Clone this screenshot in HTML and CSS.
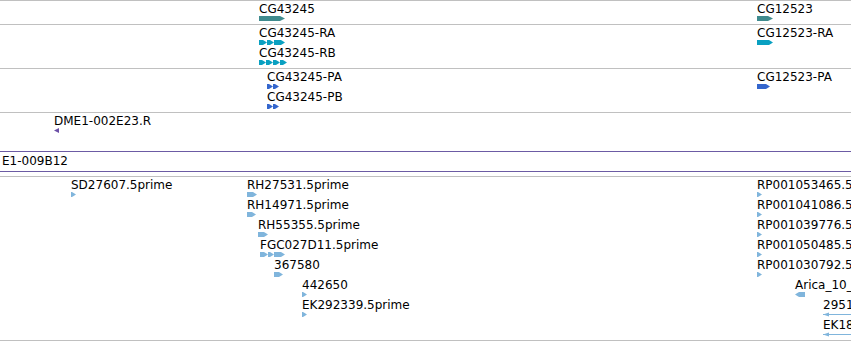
FILE: index.html
```html
<!DOCTYPE html>
<html lang="en">
<head>
    <meta charset="UTF-8">
    <title>Tracks</title>
    <link rel="stylesheet" href="styles.css">
</head>
<body>
<div class="view">

    <!-- genes -->
    <div class="track track-short">
        <div class="row">
            <div class="feature" style="left:259px">
                <div class="label">CG43245</div>
                <svg class="glyph gene" width="26" height="5"><polygon points="0,0 21,0 26,2.5 21,5 0,5"/></svg>
            </div>
            <div class="feature" style="left:757px">
                <div class="label">CG12523</div>
                <svg class="glyph gene" width="16" height="5"><polygon points="0,0 11,0 16,2.5 11,5 0,5"/></svg>
            </div>
        </div>
    </div>

    <!-- transcripts -->
    <div class="track track-two">
        <div class="row">
            <div class="feature" style="left:259px">
                <div class="label">CG43245-RA</div>
                <svg class="glyph mrna" width="26" height="5">
                    <polygon points="0,0 4,0 8,2.5 4,5 0,5"/>
                    <polygon points="8,0 11,0 15,2.5 11,5 8,5"/>
                    <polygon points="15,0 22,0 26,2.5 22,5 15,5"/>
                </svg>
            </div>
            <div class="feature" style="left:757px">
                <div class="label">CG12523-RA</div>
                <svg class="glyph mrna" width="16" height="5"><polygon points="0,0 12,0 16,2.5 12,5 0,5"/></svg>
            </div>
        </div>
        <div class="row">
            <div class="feature" style="left:259px">
                <div class="label">CG43245-RB</div>
                <svg class="glyph mrna" width="28" height="5">
                    <polygon points="0,0 3,0 7,2.5 3,5 0,5"/>
                    <polygon points="7,0 10,0 14,2.5 10,5 7,5"/>
                    <polygon points="14,0 17,0 21,2.5 17,5 14,5"/>
                    <polygon points="21,0 24,0 28,2.5 24,5 21,5"/>
                </svg>
            </div>
        </div>
    </div>

    <!-- proteins -->
    <div class="track track-two">
        <div class="row">
            <div class="feature" style="left:267px">
                <div class="label">CG43245-PA</div>
                <svg class="glyph cds" width="12" height="5">
                    <polygon points="0,0 2,0 6,2.5 2,5 0,5"/>
                    <polygon points="6,0 8,0 12,2.5 8,5 6,5"/>
                </svg>
            </div>
            <div class="feature" style="left:757px">
                <div class="label">CG12523-PA</div>
                <svg class="glyph cds" width="13" height="5"><polygon points="0,0 9,0 13,2.5 9,5 0,5"/></svg>
            </div>
        </div>
        <div class="row">
            <div class="feature" style="left:267px">
                <div class="label">CG43245-PB</div>
                <svg class="glyph cds" width="12" height="5">
                    <polygon points="0,0 2,0 6,2.5 2,5 0,5"/>
                    <polygon points="6,0 8,0 12,2.5 8,5 6,5"/>
                </svg>
            </div>
        </div>
    </div>

    <!-- clones -->
    <div class="track track-clones">
        <div class="row">
            <div class="feature" style="left:54px">
                <div class="label">DME1-002E23.R</div>
                <svg class="glyph clone" width="5" height="5"><polygon points="5,0 5,5 0,2.5"/></svg>
            </div>
        </div>
        <div class="band">E1-009B12</div>
    </div>

    <!-- ESTs -->
    <div class="track track-ests">
        <div class="row">
            <div class="feature" style="left:71px">
                <div class="label">SD27607.5prime</div>
                <svg class="glyph est" width="5" height="5"><polygon points="0,0 1,0 5,2.5 1,5 0,5"/></svg>
            </div>
            <div class="feature" style="left:247px">
                <div class="label">RH27531.5prime</div>
                <svg class="glyph est" width="10" height="5"><polygon points="0,0 6,0 10,2.5 6,5 0,5"/></svg>
            </div>
            <div class="feature" style="left:757px">
                <div class="label">RP001053465.5prime</div>
                <svg class="glyph est" width="5" height="5"><polygon points="0,0 1,0 5,2.5 1,5 0,5"/></svg>
            </div>
        </div>
        <div class="row">
            <div class="feature" style="left:247px">
                <div class="label">RH14971.5prime</div>
                <svg class="glyph est" width="9" height="5"><polygon points="0,0 5,0 9,2.5 5,5 0,5"/></svg>
            </div>
            <div class="feature" style="left:757px">
                <div class="label">RP001041086.5prime</div>
                <svg class="glyph est" width="5" height="5"><polygon points="0,0 1,0 5,2.5 1,5 0,5"/></svg>
            </div>
        </div>
        <div class="row">
            <div class="feature" style="left:258px">
                <div class="label">RH55355.5prime</div>
                <svg class="glyph est" width="10" height="5"><polygon points="0,0 6,0 10,2.5 6,5 0,5"/></svg>
            </div>
            <div class="feature" style="left:757px">
                <div class="label">RP001039776.5prime</div>
                <svg class="glyph est" width="5" height="5"><polygon points="0,0 1,0 5,2.5 1,5 0,5"/></svg>
            </div>
        </div>
        <div class="row">
            <div class="feature" style="left:260px">
                <div class="label">FGC027D11.5prime</div>
                <svg class="glyph est" width="25" height="5">
                    <polygon points="0,0 4,0 8,2.5 4,5 0,5"/>
                    <polygon points="8,0 10,0 14,2.5 10,5 8,5"/>
                    <polygon points="14,0 21,0 25,2.5 21,5 14,5"/>
                </svg>
            </div>
            <div class="feature" style="left:757px">
                <div class="label">RP001050485.5prime</div>
                <svg class="glyph est" width="5" height="5"><polygon points="0,0 1,0 5,2.5 1,5 0,5"/></svg>
            </div>
        </div>
        <div class="row">
            <div class="feature" style="left:274px">
                <div class="label">367580</div>
                <svg class="glyph est" width="9" height="5"><polygon points="0,0 5,0 9,2.5 5,5 0,5"/></svg>
            </div>
            <div class="feature" style="left:757px">
                <div class="label">RP001030792.5prime</div>
                <svg class="glyph est" width="5" height="5"><polygon points="0,0 1,0 5,2.5 1,5 0,5"/></svg>
            </div>
        </div>
        <div class="row">
            <div class="feature" style="left:302px">
                <div class="label">442650</div>
                <svg class="glyph est" width="5" height="5"><polygon points="0,0 1,0 5,2.5 1,5 0,5"/></svg>
            </div>
            <div class="feature" style="left:795px">
                <div class="label">Arica_10_5prime</div>
                <svg class="glyph est" width="10" height="5"><polygon points="10,0 4,0 0,2.5 4,5 10,5"/></svg>
            </div>
        </div>
        <div class="row">
            <div class="feature" style="left:302px">
                <div class="label">EK292339.5prime</div>
                <svg class="glyph est" width="5" height="5"><polygon points="0,0 1,0 5,2.5 1,5 0,5"/></svg>
            </div>
            <div class="feature" style="left:823px">
                <div class="label">295123</div>
                <svg class="glyph est" width="40" height="5"><rect x="0" y="2" width="40" height="1"/><polygon points="0,2.5 6,0.5 6,4.5"/></svg>
            </div>
        </div>
        <div class="row">
            <div class="feature" style="left:823px">
                <div class="label">EK182045</div>
                <svg class="glyph est" width="40" height="5"><rect x="0" y="2" width="40" height="1"/><polygon points="0,2.5 6,0.5 6,4.5"/></svg>
            </div>
        </div>
    </div>

</div>
</body>
</html>
```

FILE: styles.css
```css
body {
    margin: 0;
    padding: 0;
    background: #ffffff;
    font-family: 'DejaVu Sans', sans-serif;
    font-size: 12px;
    color: #000;
}

.view {
    width: 851px;
    height: 341px;
    overflow: hidden;
}

.track {
    border-top: 1px solid #c0c0c0;
}

.track-short {
    height: 23px;
}

.track-two {
    height: 43px;
}

.track-clones {
    height: 63px;
}

.track-ests {
    height: 163px;
    border-bottom: 1px solid #c0c0c0;
}

.row {
    position: relative;
    height: 20px;
}

.feature {
    position: absolute;
    top: 0;
}

.label {
    padding-top: 1px;
    line-height: 14px;
    white-space: nowrap;
}

.glyph {
    display: block;
}

.gene {
    fill: #3f8b8e;
}

.mrna {
    fill: #09a0c1;
}

.cds {
    fill: #3466cd;
}

.clone {
    fill: #6b4fa6;
}

.est {
    fill: #80b5dc;
}

.band {
    margin-top: 18px;
    height: 17px;
    padding: 2px 0 0 2px;
    line-height: 14px;
    border-top: 1px solid #6c5ba4;
    border-bottom: 1px solid #6c5ba4;
    white-space: nowrap;
}
```
